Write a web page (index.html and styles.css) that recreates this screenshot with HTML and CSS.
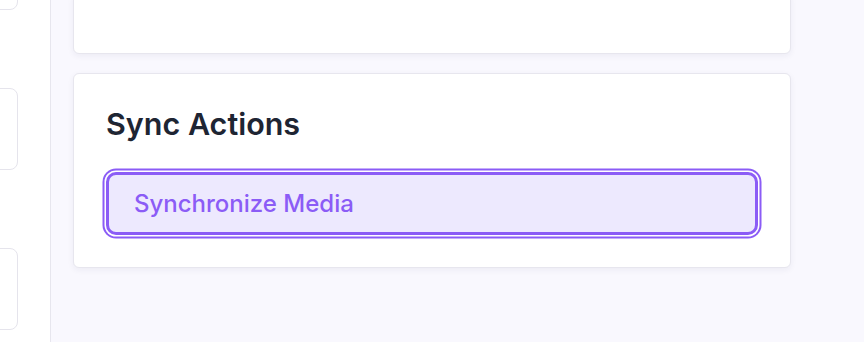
FILE: index.html
```html
<!DOCTYPE html>
<html>
<head>
  <link rel="stylesheet" href="styles.css">
</head>
<body>
  <div class="layout">
    <aside class="sidebar">
      <div class="side-list">
        <div class="side-item"></div>
        <div class="side-item"></div>
        <div class="side-item"></div>
      </div>
    </aside>
    <main class="main">
      <div class="panel panel-top"></div>
      <div class="panel">
        <h2 class="panel-title">Sync Actions</h2>
        <button class="sync-button">Synchronize Media</button>
      </div>
    </main>
  </div>
</body>
</html>
```

FILE: styles.css
```css
html, body {
  margin: 0;
  height: 100%;
  overflow: hidden;
}
body {
  font-family: Inter, "Noto Sans", sans-serif;
  background-color: #f9f8fe;
}
.layout {
  display: flex;
  height: 100%;
}
.sidebar {
  width: 50px;
  flex-shrink: 0;
  background-color: #fff;
  border-right: 1px solid #e7e6ee;
  overflow: hidden;
}
.side-list {
  display: flex;
  flex-direction: column;
  gap: 78px;
  margin-top: -72px;
  margin-left: -60px;
}
.side-item {
  width: 76px;
  height: 80px;
  border: 1px solid #e5e4ec;
  border-radius: 8px;
  background-color: #fff;
}
.main {
  flex: 1;
  display: flex;
  flex-direction: column;
  gap: 19px;
  padding: 0 73px 0 22px;
}
.panel {
  background-color: #fff;
  border: 1px solid #e7e6ee;
  border-radius: 6px;
  padding: 32px;
  box-shadow: 0 2px 6px rgba(40, 30, 80, 0.06);
}
.panel-top {
  height: 60px;
  margin-top: -8px;
  padding: 0;
}
.panel-title {
  margin: 0 0 30px;
  font-size: 30.5px;
  line-height: 36px;
  font-weight: 600;
  color: #1e2533;
}
.sync-button {
  display: block;
  width: 100%;
  height: 63px;
  padding: 0 25px;
  text-align: left;
  font-family: Inter, "Noto Sans", sans-serif;
  font-size: 24px;
  font-weight: 500;
  color: #8b5cf6;
  background-color: #ede9fe;
  border: 3px solid #8b5cf6;
  border-radius: 10px;
  box-shadow: 0 0 0 1.5px #fff, 0 0 0 3.5px #8b5cf6;
  cursor: pointer;
}
```
